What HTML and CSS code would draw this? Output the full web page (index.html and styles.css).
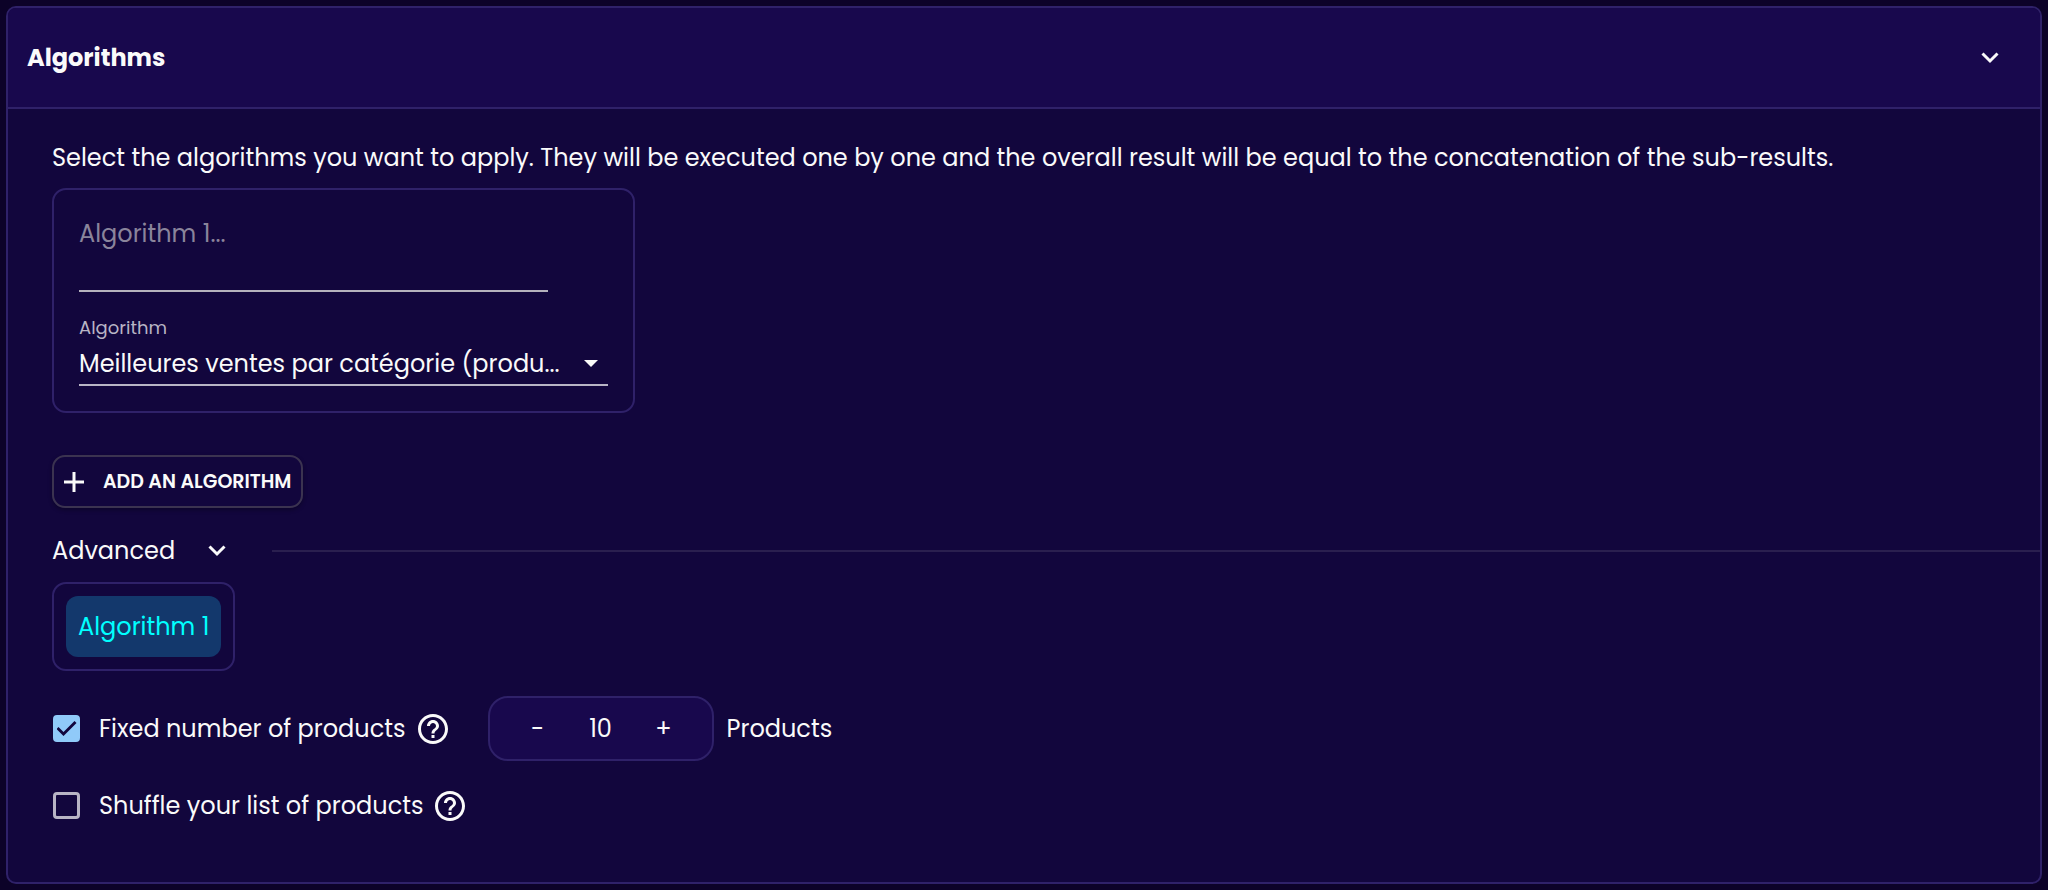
FILE: index.html
```
<!DOCTYPE html>
<html lang="en">
<head>
<meta charset="UTF-8">
<meta name="viewport" content="width=device-width, initial-scale=1">
<title>Algorithms</title>
<link rel="stylesheet" href="styles.css">
</head>
<body>
  <section class="panel">
    <header class="panel-header">
      <h2>Algorithms</h2>
      <button type="button" class="icon-button" aria-label="Collapse algorithms">
        <svg class="chevron" viewBox="0 0 18 12"><path d="M1.500 1.500L9 9l7.500-7.500"/></svg>
      </button>
    </header>

    <div class="panel-body">
      <p class="intro">Select the algorithms you want to apply. They will be executed one by one and the overall result will be equal to the concatenation of the sub-results.</p>

      <div class="algorithm">
        <input type="text" class="algorithm-name" placeholder="Algorithm 1..." aria-label="Algorithm name">
        <label for="algorithm">Algorithm</label>
        <div class="select-wrap">
          <select id="algorithm">
            <option>Meilleures ventes par catégorie (produ...</option>
          </select>
          <svg class="caret" viewBox="0 0 14 7"><path d="M0 0h14L7 7z"/></svg>
        </div>
      </div>

      <button type="button" class="add-button">
        <svg class="plus" viewBox="0 0 20 20"><path d="M10 0v20M0 10h20"/></svg>
        ADD AN ALGORITHM
      </button>

      <div class="advanced">
        <span>Advanced</span>
        <button type="button" class="icon-button" aria-label="Toggle advanced options">
          <svg class="chevron" viewBox="0 0 18 12"><path d="M1.500 1.500L9 9l7.500-7.500"/></svg>
        </button>
        <hr>
      </div>

      <div class="tabs">
        <button type="button" class="tab">Algorithm 1</button>
      </div>

      <div class="option">
        <input type="checkbox" id="fixed" checked>
        <label for="fixed">Fixed number of products</label>
        <svg class="help" viewBox="2 2 20 20"><path d="M11 18h2v-2h-2v2zm1-16C6.48 2 2 6.48 2 12s4.48 10 10 10 10-4.48 10-10S17.52 2 12 2zm0 18c-4.41 0-8-3.59-8-8s3.59-8 8-8 8 3.59 8 8-3.59 8-8 8zm0-14c-2.21 0-4 1.79-4 4h2c0-1.1.9-2 2-2s2 .9 2 2c0 2-3 1.75-3 5h2c0-2.25 3-2.5 3-5 0-2.21-1.79-4-4-4z"/></svg>
        <div class="stepper">
          <button type="button" id="minus" aria-label="Decrease">-</button>
          <input type="text" id="count" value="10" inputmode="numeric">
          <button type="button" id="plus" aria-label="Increase">+</button>
        </div>
        <label for="count" class="unit">Products</label>
      </div>

      <div class="option">
        <input type="checkbox" id="shuffle">
        <label for="shuffle">Shuffle your list of products</label>
        <svg class="help" viewBox="2 2 20 20"><path d="M11 18h2v-2h-2v2zm1-16C6.48 2 2 6.48 2 12s4.48 10 10 10 10-4.48 10-10S17.52 2 12 2zm0 18c-4.41 0-8-3.59-8-8s3.59-8 8-8 8 3.59 8 8-3.59 8-8 8zm0-14c-2.21 0-4 1.79-4 4h2c0-1.1.9-2 2-2s2 .9 2 2c0 2-3 1.75-3 5h2c0-2.25 3-2.5 3-5 0-2.21-1.79-4-4-4z"/></svg>
      </div>
    </div>
  </section>

  <script>
    const count = document.getElementById('count');

    function step(delta) {
      const value = parseInt(count.value, 10) || 0;
      count.value = Math.max(0, value + delta);
    }

    document.getElementById('minus').addEventListener('click', () => step(-1));
    document.getElementById('plus').addEventListener('click', () => step(1));
  </script>
</body>
</html>
```

FILE: styles.css
```
* {
  box-sizing: border-box;
  margin: 0;
  padding: 0;
}

body {
  background: #0c0228;
  color: #fafafa;
  font-family: Poppins, Inter, sans-serif;
  font-size: 24px;
  line-height: 32px;
  padding: 6px;
}

button,
input,
select {
  font: inherit;
  color: inherit;
  background: none;
  border: none;
}

button {
  cursor: pointer;
}

.panel {
  background: #12063d;
  border: 2px solid #2f2169;
  border-radius: 10px;
}

.panel-header {
  display: flex;
  justify-content: space-between;
  align-items: center;
  height: 101px;
  padding: 0 41px 0 19px;
  background: #18084d;
  border-bottom: 2px solid #2f2169;
  border-radius: 8px 8px 0 0;
}

.panel-header h2 {
  font-size: 24px;
  font-weight: 700;
}

.icon-button {
  display: flex;
}

.chevron {
  width: 18px;
  height: 12px;
  fill: none;
  stroke: #fafafa;
  stroke-width: 3;
}

.panel-body {
  display: flex;
  flex-direction: column;
  align-items: flex-start;
  padding: 33px 0 44px 44px;
}

.intro {
  margin-bottom: 14px;
}

.algorithm {
  width: 583px;
  height: 225px;
  padding: 24px 25px;
  border: 2px solid #2f2169;
  border-radius: 14px;
}

.algorithm-name {
  display: block;
  width: 469px;
  height: 78px;
  padding-bottom: 38px;
  border-bottom: 2px solid #b5b2bd;
}

.algorithm-name::placeholder {
  color: #8a849b;
  opacity: 1;
}

.algorithm label {
  display: block;
  margin-top: 24px;
  font-size: 18px;
  line-height: 24px;
  color: #b8b4c5;
}

.select-wrap {
  display: grid;
  align-items: center;
}

.select-wrap select,
.select-wrap .caret {
  grid-area: 1 / 1;
}

.select-wrap select {
  appearance: none;
  width: 100%;
  height: 46px;
  padding-top: 3px;
  border-bottom: 2px solid #b8b4c5;
}

.caret {
  justify-self: end;
  width: 14px;
  height: 7px;
  margin-right: 10px;
  fill: #fafafa;
  pointer-events: none;
}

.add-button {
  display: flex;
  align-items: center;
  gap: 19px;
  height: 53px;
  margin-top: 42px;
  padding: 0 10px;
  border: 2px solid #3b3350;
  border-radius: 13px;
  box-shadow: 0 2px 4px rgba(0, 0, 0, 0.3);
  font-size: 19px;
  font-weight: 600;
}

.plus {
  width: 20px;
  height: 20px;
  stroke: #fafafa;
  stroke-width: 3;
}

.advanced {
  display: flex;
  align-items: center;
  align-self: stretch;
  height: 32px;
  margin: 27px 0 15px;
}

.advanced .icon-button {
  margin: 0 46px 0 33px;
}

.advanced hr {
  flex: 1;
  border: none;
  border-top: 2px solid #2a1f4f;
}

.tabs {
  display: flex;
  margin-bottom: 25px;
  padding: 12px;
  border: 2px solid #2f2169;
  border-radius: 14px;
}

.tab {
  height: 61px;
  padding: 0 12px;
  border-radius: 12px;
  background: #13386c;
  color: #0ff;
}

.option {
  display: flex;
  align-items: center;
  height: 65px;
}

.option + .option {
  margin-top: 12px;
}

.option input[type="checkbox"] {
  appearance: none;
  display: grid;
  place-items: center;
  width: 27px;
  height: 27px;
  margin: 0 19px 0 1px;
  border: 3px solid #b8b4c5;
  border-radius: 4px;
}

.option input[type="checkbox"]:checked {
  border-color: #90caf9;
  background: #90caf9;
}

.option input[type="checkbox"]:checked::before {
  content: "";
  width: 20px;
  height: 15px;
  background: #12063d;
  clip-path: polygon(0 53%, 10% 40%, 35% 73%, 90% 0, 100% 13%, 35% 100%);
}

.help {
  width: 30px;
  height: 30px;
  margin-left: 12px;
  fill: #fafafa;
}

.stepper {
  display: flex;
  justify-content: center;
  align-items: center;
  width: 226px;
  height: 65px;
  margin-left: 40px;
  background: #18084d;
  border: 2px solid #2f2169;
  border-radius: 20px;
}

.stepper button {
  width: 40px;
}

.stepper input {
  width: 86px;
  text-align: center;
}

.unit {
  margin-left: 13px;
}
```
